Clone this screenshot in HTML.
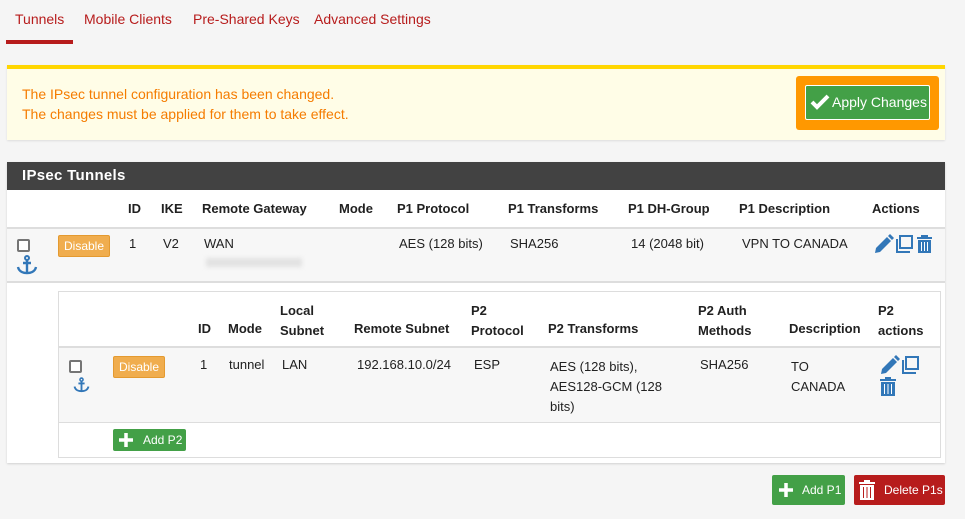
<!DOCTYPE html>
<html><head><meta charset="utf-8"><style>
*{margin:0;padding:0;box-sizing:border-box}
body{width:965px;height:519px;background:#f5f5f5;font-family:"Liberation Sans",sans-serif;font-size:13px;color:#212121;position:relative;overflow:hidden}
.a{position:absolute;white-space:nowrap}
.b{font-weight:bold}
.tab{color:#b71c1c;font-size:14px;top:11px}
.dis{background:#f0ad4e;color:#fff;border-radius:2px;font-size:12px;padding:3px 5px;border:1px solid #e49a30}
.cb{width:13px;height:13px;border:2px solid #757575;border-radius:2px;background:#fff}
.ic{fill:#3277b8}
</style></head><body>
<div class="a tab" style="left:15px">Tunnels</div>
<div class="a tab" style="left:84px">Mobile Clients</div>
<div class="a tab" style="left:193px">Pre-Shared Keys</div>
<div class="a tab" style="left:314px">Advanced Settings</div>
<div class="a" style="left:6px;top:40px;width:67px;height:4px;background:#b71c1c"></div>

<div class="a" style="left:7px;top:65px;width:938px;height:75px;background:#fffde7;border-top:4px solid #ffd600;box-shadow:0 1px 2px rgba(0,0,0,.1)"></div>
<div class="a" style="left:22px;top:84px;color:#f57c00;font-size:14px;line-height:20px">The IPsec tunnel configuration has been changed.<br>The changes must be applied for them to take effect.</div>
<div class="a" style="left:796px;top:76px;width:143px;height:54px;background:#ff9800;border-radius:3px"></div>
<div class="a" style="left:805px;top:85px;width:125px;height:35px;background:#43a047;border:1px solid #fff;border-radius:2px;color:#fff;font-size:14px;padding:8px 0 0 26px">Apply Changes</div>
<svg class="a" style="left:810px;top:94px" width="20" height="16" viewBox="0 0 20 16"><path d="M2 8l5 5L18 2" stroke="#fff" stroke-width="4" fill="none"/></svg>

<div class="a" style="left:7px;top:162px;width:938px;height:301px;background:#fff;box-shadow:0 1px 2px rgba(0,0,0,.15)"></div>
<div class="a b" style="left:7px;top:162px;width:938px;height:28px;background:#424242;color:#fff;font-size:15px;padding:5px 0 0 15px;letter-spacing:.3px">IPsec Tunnels</div>
<div class="a" style="left:7px;top:227px;width:938px;height:56px;background:#f7f7f7;border-top:2px solid #ddd;border-bottom:2px solid #ddd"></div>
<div class="a b" style="left:128px;top:201px">ID</div>
<div class="a b" style="left:161px;top:201px">IKE</div>
<div class="a b" style="left:202px;top:201px">Remote Gateway</div>
<div class="a b" style="left:339px;top:201px">Mode</div>
<div class="a b" style="left:397px;top:201px">P1 Protocol</div>
<div class="a b" style="left:508px;top:201px">P1 Transforms</div>
<div class="a b" style="left:628px;top:201px">P1 DH-Group</div>
<div class="a b" style="left:739px;top:201px">P1 Description</div>
<div class="a b" style="left:872px;top:201px">Actions</div>
<div class="a cb" style="left:17px;top:239px"></div>
<svg class="a" style="left:16px;top:255px" width="22" height="20" viewBox="0 0 22 20"><circle cx="11" cy="3" r="2" stroke="#3277b8" stroke-width="2" fill="none"/><path d="M11 5v13M7 8h8M2 12c1 5 6 6 9 6s8-1 9-6" stroke="#3277b8" stroke-width="2.4" fill="none"/></svg>
<div class="a dis" style="left:58px;top:235px">Disable</div>
<div class="a" style="left:129px;top:236px">1</div>
<div class="a" style="left:163px;top:236px">V2</div>
<div class="a" style="left:204px;top:236px">WAN</div>
<div class="a" style="left:206px;top:258px;width:96px;height:9px;background:#e2e2e2;filter:blur(2px)"></div>
<div class="a" style="left:399px;top:236px">AES (128 bits)</div>
<div class="a" style="left:510px;top:236px">SHA256</div>
<div class="a" style="left:631px;top:236px">14 (2048 bit)</div>
<div class="a" style="left:742px;top:236px">VPN TO CANADA</div>
<svg class="a" style="left:874px;top:234px" width="62" height="20" viewBox="0 0 62 20">
<path class="ic" d="M1 19l1-5L13 3l4 4L6 18z M14 2l2-2 4 4-2 2z"/>
<path d="M23 5v13h13" stroke="#3277b8" stroke-width="2" fill="none"/><rect x="26" y="2" width="12" height="12" stroke="#3277b8" stroke-width="2" fill="none"/>
<path class="ic" d="M43 3h15v2H43z M47 1h7v2h-7z M44 6h13v13H44z"/>
<path d="M47.5 8v9M50.5 8v9M53.5 8v9" stroke="#fff" stroke-width="1"/></svg>

<div class="a" style="left:58px;top:291px;width:883px;height:167px;border:1px solid #ddd;background:#fff"></div>
<div class="a" style="left:59px;top:346px;width:881px;height:77px;background:#f7f7f7;border-top:2px solid #ddd;border-bottom:1px solid #ddd"></div>
<div class="a b" style="left:198px;top:321px">ID</div>
<div class="a b" style="left:228px;top:321px">Mode</div>
<div class="a b" style="left:280px;top:301px;line-height:20px">Local<br>Subnet</div>
<div class="a b" style="left:354px;top:321px">Remote Subnet</div>
<div class="a b" style="left:471px;top:301px;line-height:20px">P2<br>Protocol</div>
<div class="a b" style="left:548px;top:321px">P2 Transforms</div>
<div class="a b" style="left:698px;top:301px;line-height:20px">P2 Auth<br>Methods</div>
<div class="a b" style="left:789px;top:321px">Description</div>
<div class="a b" style="left:878px;top:301px;line-height:20px">P2<br>actions</div>
<div class="a cb" style="left:69px;top:360px"></div>
<svg class="a" style="left:73px;top:377px" width="17" height="16" viewBox="0 0 22 20"><circle cx="11" cy="3" r="2" stroke="#3277b8" stroke-width="2" fill="none"/><path d="M11 5v13M7 8h8M2 12c1 5 6 6 9 6s8-1 9-6" stroke="#3277b8" stroke-width="2.4" fill="none"/></svg>
<div class="a dis" style="left:113px;top:356px">Disable</div>
<div class="a" style="left:200px;top:357px">1</div>
<div class="a" style="left:229px;top:357px">tunnel</div>
<div class="a" style="left:282px;top:357px">LAN</div>
<div class="a" style="left:357px;top:357px">192.168.10.0/24</div>
<div class="a" style="left:474px;top:357px">ESP</div>
<div class="a" style="left:550px;top:357px;line-height:20px">AES (128 bits),<br>AES128-GCM (128<br>bits)</div>
<div class="a" style="left:700px;top:357px">SHA256</div>
<div class="a" style="left:791px;top:357px;line-height:20px">TO<br>CANADA</div>
<svg class="a" style="left:880px;top:355px" width="42" height="42" viewBox="0 0 42 42">
<path class="ic" d="M1 19l1-5L13 3l4 4L6 18z M14 2l2-2 4 4-2 2z"/>
<path d="M23 5v13h13" stroke="#3277b8" stroke-width="2" fill="none"/><rect x="26" y="2" width="12" height="12" stroke="#3277b8" stroke-width="2" fill="none"/>
<path class="ic" d="M0 24h16v2H0z M5 22h6v2H5z M1 27h14v14H1z"/>
<path d="M4.5 29v10M8 29v10M11.5 29v10" stroke="#fff" stroke-width="1"/></svg>
<div class="a" style="left:113px;top:429px;width:73px;height:22px;background:#43a047;border-radius:2px;color:#fff;font-size:12px;padding:4px 0 0 30px">Add P2</div>
<svg class="a" style="left:118px;top:432px" width="16" height="16" viewBox="0 0 16 16"><path d="M8 1v14M1 8h14" stroke="#fff" stroke-width="3.5"/></svg>

<div class="a" style="left:772px;top:475px;width:73px;height:30px;background:#43a047;border-radius:2px;color:#fff;font-size:12px;padding:8px 0 0 30px">Add P1</div>
<svg class="a" style="left:778px;top:482px" width="16" height="16" viewBox="0 0 16 16"><path d="M8 1v14M1 8h14" stroke="#fff" stroke-width="3.5"/></svg>
<div class="a" style="left:854px;top:475px;width:91px;height:30px;background:#b71c1c;border-radius:2px;color:#fff;font-size:12px;padding:8px 0 0 30px">Delete P1s</div>
<svg class="a" style="left:859px;top:480px" width="16" height="20" viewBox="0 0 16 20"><path fill="#fff" d="M0 2h16v2H0z M5 0h6v2H5z M1 5h14v15H1z"/><path d="M4.5 7v11M8 7v11M11.5 7v11" stroke="#b71c1c" stroke-width="1"/></svg>
</body></html>
